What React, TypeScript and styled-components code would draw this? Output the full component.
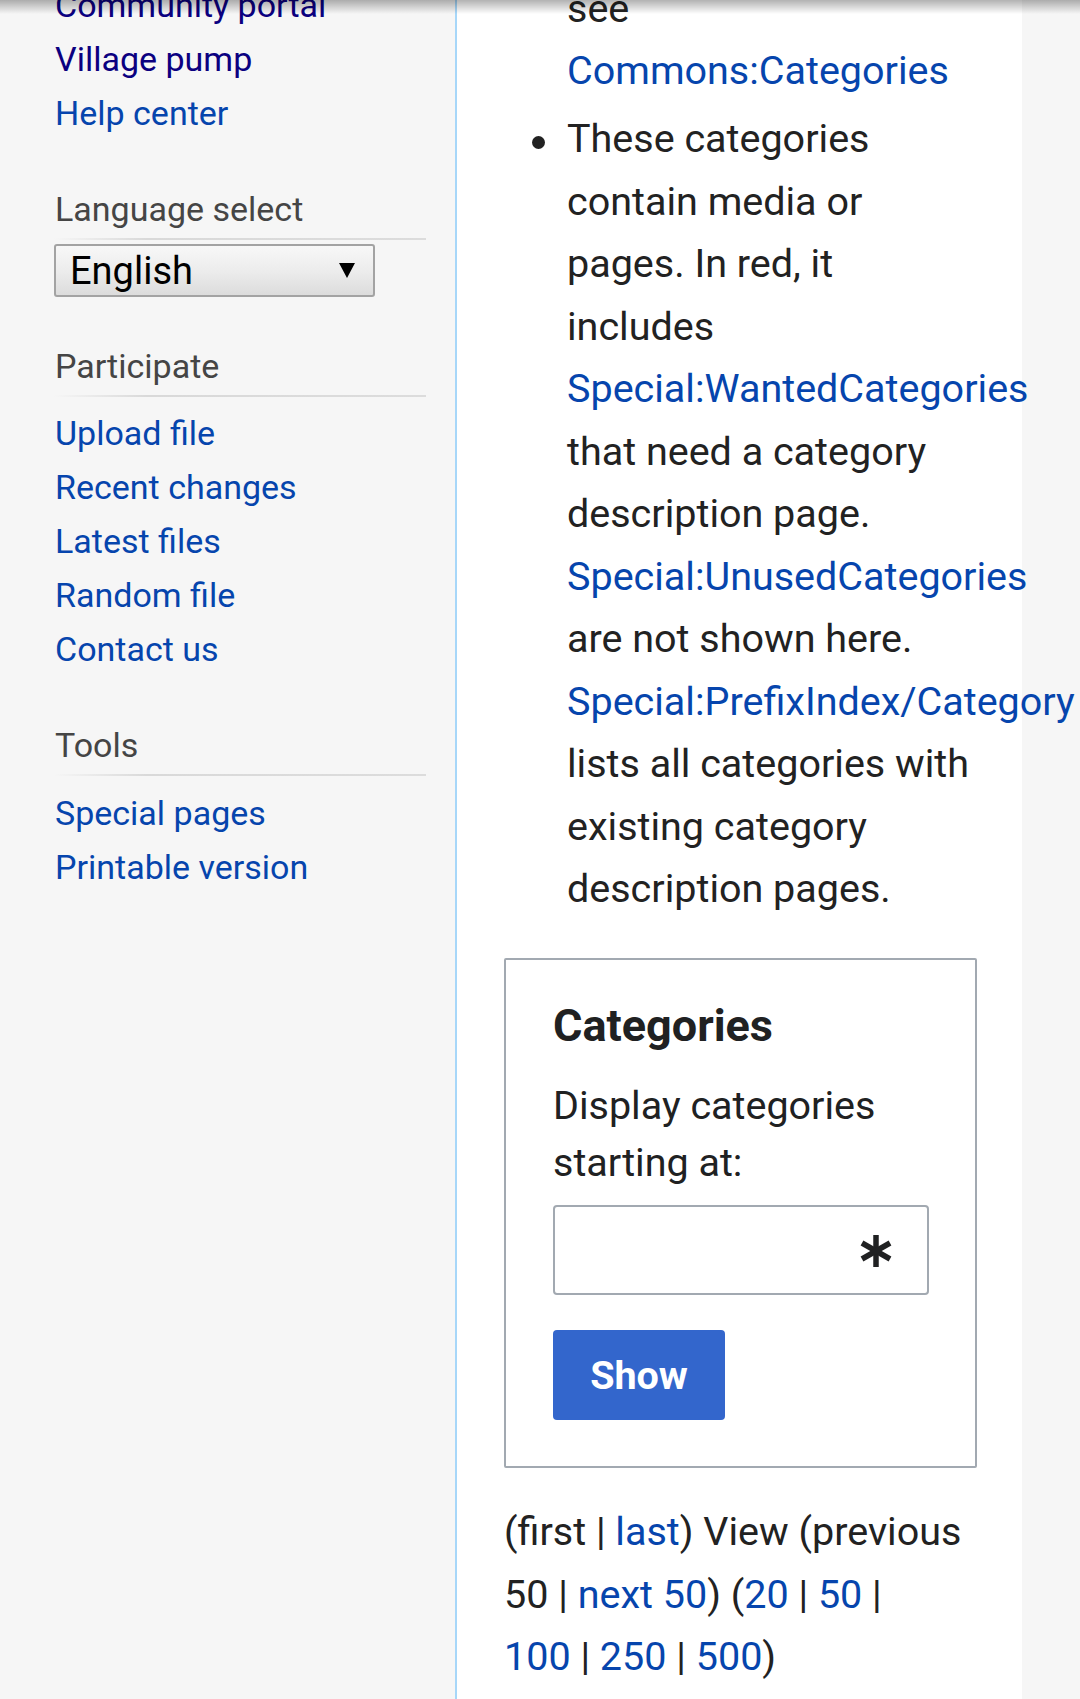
import React from "react";
import styled, { createGlobalStyle } from "styled-components";

const GlobalStyle = createGlobalStyle`
  html, body {
    margin: 0;
    padding: 0;
    background: #f6f6f6;
    overflow: hidden;
  }
  body {
    font-family: Roboto, "Noto Sans", "Liberation Sans", sans-serif;
  }
  * { box-sizing: border-box; }
`;

const Page = styled.div`
  position: relative;
  display: flex;
  align-items: stretch;
  width: 1080px;
  min-height: 1699px;
  overflow: hidden;
`;

const TopShadow = styled.div`
  position: absolute;
  top: 0;
  left: 0;
  right: 0;
  height: 14px;
  background: linear-gradient(to bottom, rgba(0, 0, 0, 0.3), rgba(0, 0, 0, 0));
  pointer-events: none;
  z-index: 5;
`;

/* ---------- Sidebar ---------- */

const Sidebar = styled.nav`
  flex: none;
  width: 455px;
  padding: 0 29px 0 54px;
  background: #f6f6f6;
`;

const Portal = styled.section<{ $first?: boolean }>`
  margin-top: ${(p) => (p.$first ? "-22.2px" : "49px")};
`;

const PortalHeading = styled.h3`
  margin: 0;
  padding: 0 0 11px 1px;
  font-size: 34px;
  line-height: 40px;
  font-weight: 400;
  color: #454545;
  background-image: linear-gradient(
    to right,
    rgba(215, 215, 215, 0) 0,
    #d9d9d9 25%,
    #dcdcdc 100%
  );
  background-size: 100% 2px;
  background-repeat: no-repeat;
  background-position: left bottom;
`;

const PortalLinks = styled.ul<{ $flush?: boolean }>`
  list-style: none;
  margin: 0;
  padding: ${(p) => (p.$flush ? "0" : "9.6px")} 0 0 1px;
`;

const PortalItem = styled.li`
  font-size: 34px;
  line-height: 54px;
  white-space: nowrap;
`;

const NavLink = styled.a<{ $visited?: boolean }>`
  color: ${(p) => (p.$visited ? "#0b0080" : "#0645ad")};
  text-decoration: none;
`;

const LangSelect = styled.div`
  display: flex;
  align-items: center;
  justify-content: space-between;
  margin-top: 4px;
  width: 321px;
  height: 53px;
  padding: 0 18px 0 14px;
  border: 2px solid #a3a3a3;
  border-radius: 3px;
  background: linear-gradient(to bottom, #f8f8f8 0%, #ebebeb 55%, #dcdcdc 100%);
  font-size: 38px;
  color: #000;
`;

const LangValue = styled.span`
  line-height: 1;
  margin-top: 1px;
`;

const Arrow = styled.svg`
  width: 16px;
  height: 15px;
  flex: none;
`;

/* ---------- Content ---------- */

const Content = styled.main`
  flex: none;
  width: 567px;
  padding: 0 45px 0 47px;
  background: #fff;
  border-left: 2px solid #a7d7f9;
  color: #222;
  font-size: 39.5px;
  line-height: 62.5px;
`;

const BulletList = styled.ul`
  margin: -22.4px 0 0 63px;
  padding: 0;
  list-style: none;
`;

const BulletItem = styled.li<{ $continued?: boolean }>`
  position: relative;
  margin-bottom: 5.5px;

  &::before {
    content: "";
    display: ${(p) => (p.$continued ? "none" : "block")};
    position: absolute;
    left: -35.5px;
    top: 27.5px;
    width: 13px;
    height: 13px;
    border-radius: 50%;
    background: #222;
  }
`;

const TextLink = styled.a`
  color: #0645ad;
  text-decoration: none;
`;

const FormBox = styled.form`
  margin-top: 37.4px;
  padding: 36.5px 46px 46px 47px;
  border: 2px solid #a2a9b1;
  border-radius: 2px;
`;

const FormTitle = styled.div`
  margin: 0 0 23.5px;
  font-size: 45px;
  line-height: 57px;
  font-weight: 700;
  color: #202122;
`;

const FormLabel = styled.label`
  display: block;
  font-size: 39.5px;
  line-height: 57px;
  color: #202122;
`;

const InputFrame = styled.div`
  display: flex;
  align-items: center;
  justify-content: flex-end;
  margin-top: 14px;
  height: 90px;
  padding-right: 34px;
  border: 2px solid #a2a9b1;
  border-radius: 4px;
  background: #fff;
`;

const RequiredIcon = styled.svg`
  width: 34px;
  height: 32px;
  margin-top: 2px;
`;

const SubmitButton = styled.button`
  display: block;
  margin-top: 35px;
  width: 172px;
  height: 90px;
  padding: 0;
  border: none;
  border-radius: 4px;
  background: #36c;
  color: #fff;
  font-family: inherit;
  font-size: 39.5px;
  font-weight: 700;
`;

const Pager = styled.p`
  margin: 33px 0 0;
  font-size: 39.5px;
  line-height: 62.5px;
  color: #222;
`;

const Break = styled.br``;

const navLinks = [
  { label: "Community portal", visited: true },
  { label: "Village pump", visited: true },
  { label: "Help center", visited: false },
];

const participateLinks = [
  "Upload file",
  "Recent changes",
  "Latest files",
  "Random file",
  "Contact us",
];

const toolLinks = ["Special pages", "Printable version"];

export default function App() {
  return (
    <>
      <GlobalStyle />
      <Page>
        <TopShadow />
        <Sidebar>
          <Portal $first>
            <PortalLinks $flush>
              {navLinks.map((l) => (
                <PortalItem key={l.label}>
                  <NavLink href="#" $visited={l.visited}>
                    {l.label}
                  </NavLink>
                </PortalItem>
              ))}
            </PortalLinks>
          </Portal>

          <Portal>
            <PortalHeading>Language select</PortalHeading>
            <LangSelect role="combobox" aria-label="Language select">
              <LangValue>English</LangValue>
              <Arrow viewBox="0 0 16 15" aria-hidden="true">
                <polygon points="0,0 16,0 8,15" fill="#000" />
              </Arrow>
            </LangSelect>
          </Portal>

          <Portal>
            <PortalHeading>Participate</PortalHeading>
            <PortalLinks>
              {participateLinks.map((l) => (
                <PortalItem key={l}>
                  <NavLink href="#">{l}</NavLink>
                </PortalItem>
              ))}
            </PortalLinks>
          </Portal>

          <Portal>
            <PortalHeading>Tools</PortalHeading>
            <PortalLinks>
              {toolLinks.map((l) => (
                <PortalItem key={l}>
                  <NavLink href="#">{l}</NavLink>
                </PortalItem>
              ))}
            </PortalLinks>
          </Portal>
        </Sidebar>

        <Content>
          <BulletList>
            <BulletItem $continued>
              see <TextLink href="#">Commons:Categories</TextLink>
            </BulletItem>
            <BulletItem>
              These categories contain media or pages. In red, it includes{" "}
              <TextLink href="#">Special:WantedCategories</TextLink> that need a
              category description page.{" "}
              <TextLink href="#">Special:UnusedCategories</TextLink> are not
              shown here.{" "}
              <TextLink href="#">Special:PrefixIndex/Category</TextLink> lists
              all categories with existing category description pages.
            </BulletItem>
          </BulletList>

          <FormBox onSubmit={(e) => e.preventDefault()}>
            <FormTitle>Categories</FormTitle>
            <FormLabel>Display categories starting at:</FormLabel>
            <InputFrame>
              <RequiredIcon viewBox="0 0 34 32" aria-hidden="true">
                <g stroke="#202122" strokeWidth="5.5" strokeLinecap="butt">
                  <line x1="17" y1="0" x2="17" y2="32" />
                  <line x1="3" y1="8" x2="31" y2="24" />
                  <line x1="3" y1="24" x2="31" y2="8" />
                </g>
              </RequiredIcon>
            </InputFrame>
            <SubmitButton type="submit">Show</SubmitButton>
          </FormBox>

          <Pager>
            (first | <TextLink href="#">last</TextLink>) View (previous 50 |{" "}
            <TextLink href="#">next 50</TextLink>) (<TextLink href="#">20</TextLink>{" "}
            | <TextLink href="#">50</TextLink> |<Break />
            <TextLink href="#">100</TextLink> | <TextLink href="#">250</TextLink>{" "}
            | <TextLink href="#">500</TextLink>)
          </Pager>
        </Content>
      </Page>
    </>
  );
}
